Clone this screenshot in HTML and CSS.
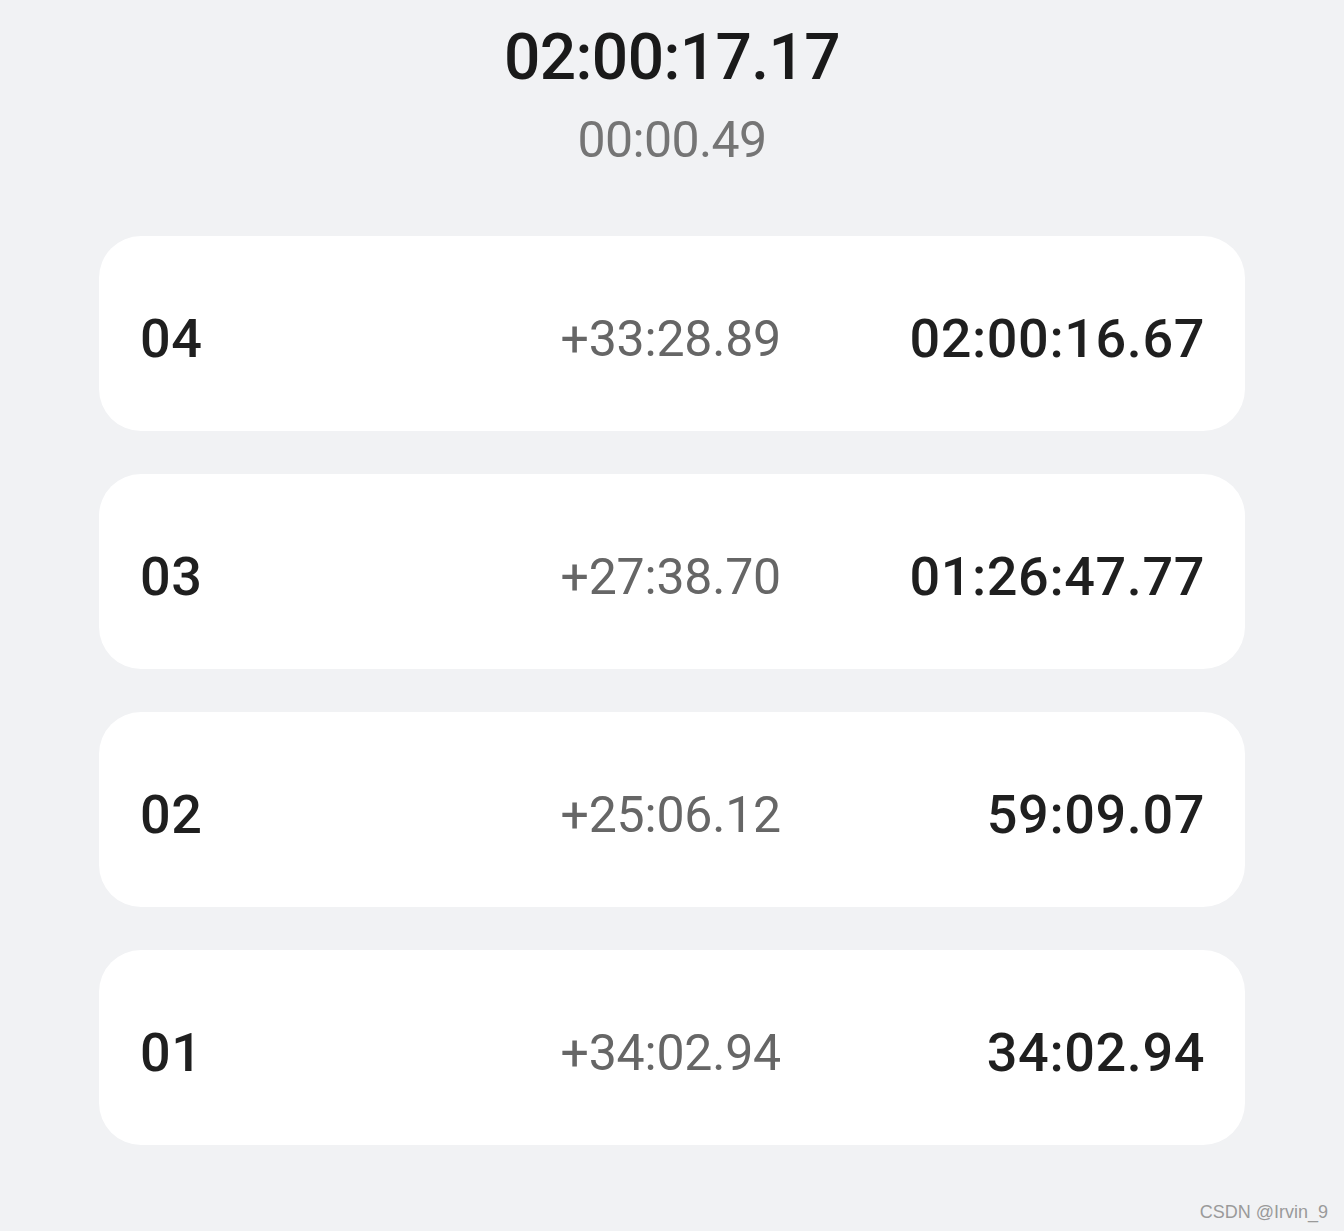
FILE: index.html
```html
<!DOCTYPE html>
<html lang="en">
<head>
    <meta charset="UTF-8">
    <title>Stopwatch</title>
    <link rel="stylesheet" href="styles.css">
</head>
<body>
    <div class="watch">
        <div class="total">02:00:17.17</div>
        <div class="current">00:00.49</div>
    </div>

    <div class="laps">
        <div class="lap">
            <span class="num">04</span>
            <span class="diff">+33:28.89</span>
            <span class="time">02:00:16.67</span>
        </div>
        <div class="lap">
            <span class="num">03</span>
            <span class="diff">+27:38.70</span>
            <span class="time">01:26:47.77</span>
        </div>
        <div class="lap">
            <span class="num">02</span>
            <span class="diff">+25:06.12</span>
            <span class="time">59:09.07</span>
        </div>
        <div class="lap">
            <span class="num">01</span>
            <span class="diff">+34:02.94</span>
            <span class="time">34:02.94</span>
        </div>
    </div>

    <div class="mark">CSDN @Irvin_9</div>
</body>
</html>
```

FILE: styles.css
```css
body {
    margin: 0;
    background: #f1f2f4;
    font-family: Roboto, 'Noto Sans', sans-serif;
    color: #1a1a1a;
    height: 1231px;
    position: relative;
}
.watch {
    text-align: center;
    padding-top: 20px;
}
.total {
    font-size: 64px;
    line-height: 76px;
    letter-spacing: -0.6px;
    font-weight: 500;
    color: #1a1a1a;
}
.current {
    font-size: 50px;
    line-height: 60px;
    letter-spacing: -0.6px;
    color: #757575;
    margin-top: 14px;
}
.laps {
    display: flex;
    flex-direction: column;
    gap: 43px;
    margin: 66px 99px 0 99px;
}
.lap {
    display: grid;
    grid-template-columns: 1fr 300px 422px;
    align-items: center;
    height: 185px;
    padding: 10px 40px 0 41px;
    background: #fff;
    border-radius: 42px;
}
.num, .time {
    font-size: 54px;
    letter-spacing: 0.6px;
    font-weight: 500;
    color: #1f1f1f;
}
.diff {
    font-size: 50px;
    letter-spacing: -0.2px;
    color: #666;
    text-align: right;
    padding-right: 2px;
}
.time {
    text-align: right;
}
.mark {
    position: absolute;
    right: 16px;
    bottom: 8px;
    font-family: 'Liberation Sans', Arial, sans-serif;
    font-size: 18px;
    color: #9a9a9a;
}
```
